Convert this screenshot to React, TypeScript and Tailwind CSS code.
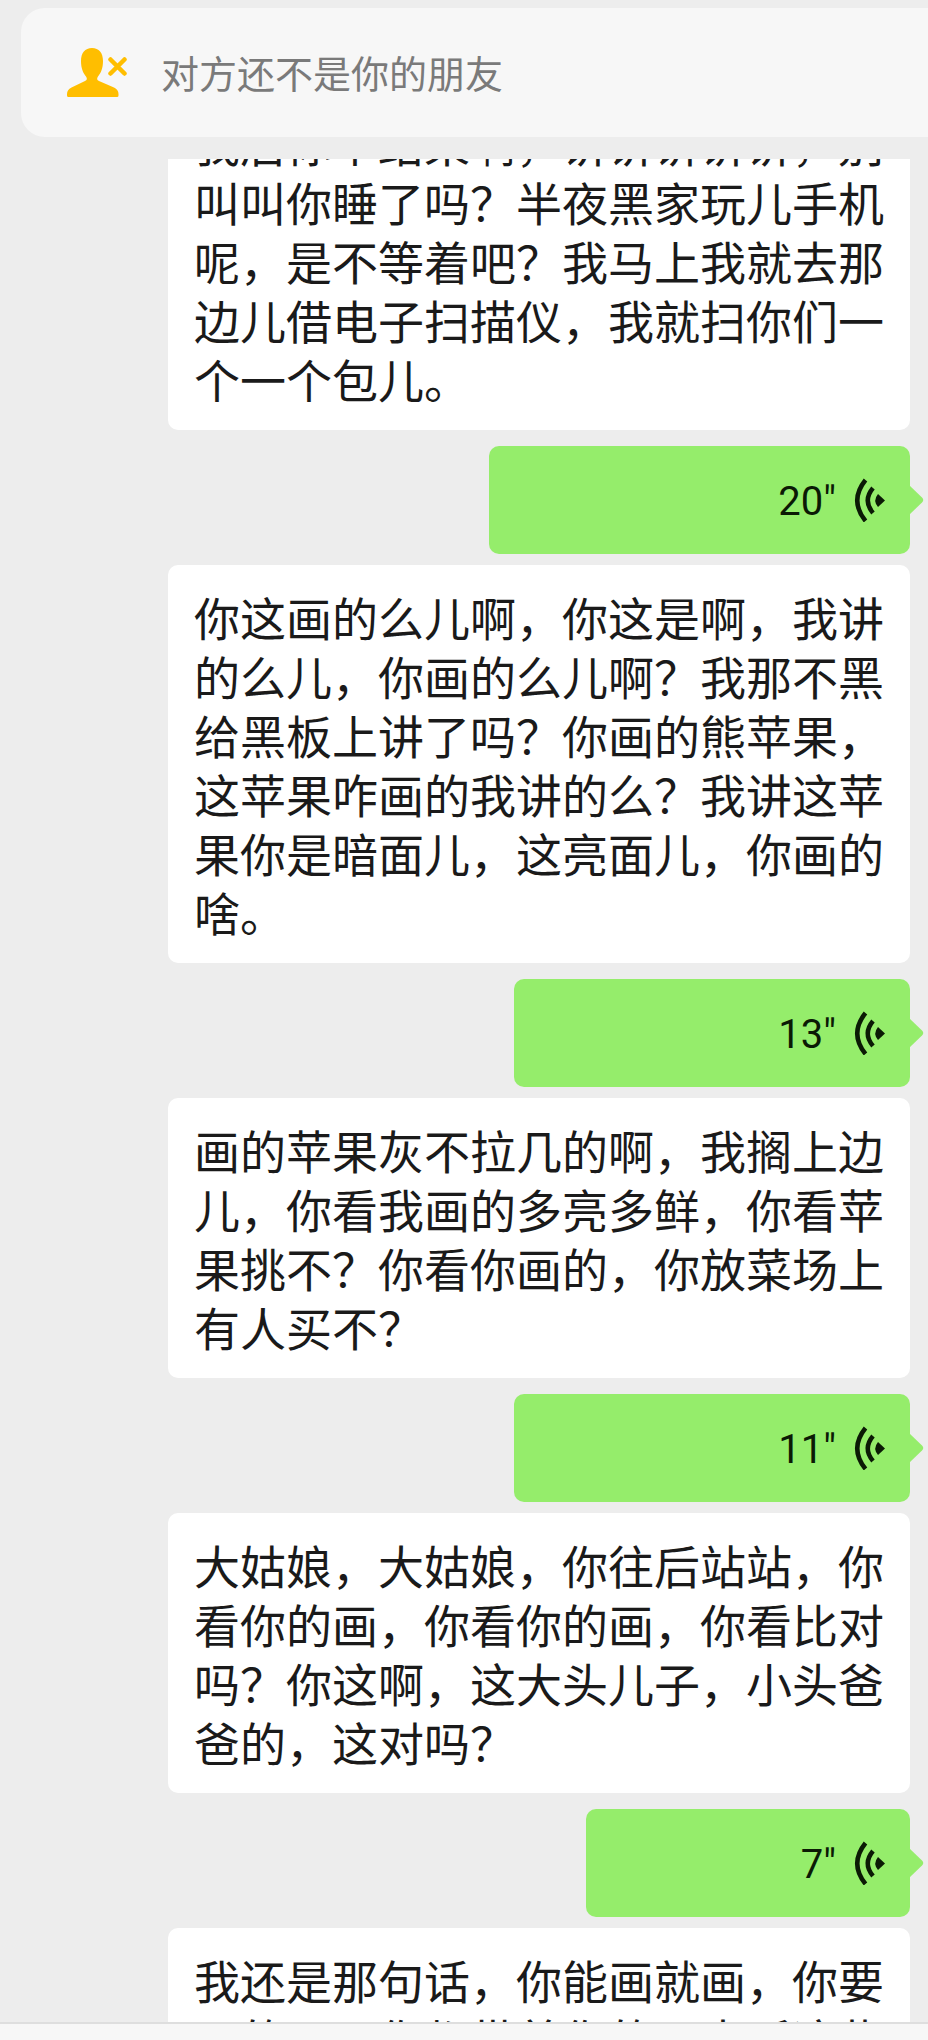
import React, { useLayoutEffect, useRef } from 'react';

type Message = {
  seconds?: number;
  size?: string;
  text: string;
};

const messages: Message[] = [
  {
    text: '我后你个结果啊，讲讲讲讲讲，别叫叫你睡了吗？半夜黑家玩儿手机呢，是不等着吧？我马上我就去那边儿借电子扫描仪，我就扫你们一个一个包儿。',
  },
  {
    seconds: 20,
    size: 'w-[421px]',
    text: '你这画的么儿啊，你这是啊，我讲的么儿，你画的么儿啊？我那不黑给黑板上讲了吗？你画的熊苹果，这苹果咋画的我讲的么？我讲这苹果你是暗面儿，这亮面儿，你画的啥。',
  },
  {
    seconds: 13,
    size: 'w-[396px]',
    text: '画的苹果灰不拉几的啊，我搁上边儿，你看我画的多亮多鲜，你看苹果挑不？你看你画的，你放菜场上有人买不？',
  },
  {
    seconds: 11,
    size: 'w-[396px]',
    text: '大姑娘，大姑娘，你往后站站，你看你的画，你看你的画，你看比对吗？你这啊，这大头儿子，小头爸爸的，这对吗？',
  },
  {
    seconds: 7,
    size: 'w-[324px]',
    text: '我还是那句话，你能画就画，你要画的画，你都带着你的画本听这些',
  },
];

const StrangerIcon = () => (
  <svg viewBox="0 0 60 52" className="h-[52px] w-[60px] shrink-0" aria-hidden="true">
    <path
      fill="#ffbe00"
      d="M25 2C18 2 14 7 14 15c0 7 2 12 5 15.500c1.500 2 1 3.500-1 4.500L4.500 41.500C1.500 43 0 45 0 48v1.500Q0 51 1.500 51h48.500q1.500 0 1.500-1.500V48c0-3-1.500-5-4.500-6.500L32 35c-2-1-2.500-2.500-1-4.500c3-3.500 5-8.500 5-15.500C36 7 32 2 25 2Z"
    />
    <path d="M43.500 13.500 57.500 27.500M57.500 13.500 43.500 27.500" stroke="#ffbe00" strokeWidth="4.500" strokeLinecap="round" />
  </svg>
);

const VoiceIcon = () => (
  <svg viewBox="0 0 32 44" className="h-[44px] w-[32px] shrink-0" fill="none" aria-hidden="true">
    <path d="M11.500 2Q-5 22.500 11.500 43" stroke="#0b1a05" strokeWidth="4.500" />
    <path d="M19 10Q8.500 22.500 19 35" stroke="#0b1a05" strokeWidth="4.500" />
    <path d="M24 16 31 22.500 24 29Q18.500 22.500 24 16Z" fill="#0b1a05" />
  </svg>
);

const VoiceBubble = ({ seconds, size }: { seconds: number; size?: string }) => (
  <button
    type="button"
    className={`relative flex h-[108px] items-center justify-end gap-[18px] rounded-[10px] bg-[#95ed6b] pr-6 ${size}`}
  >
    <span className="pt-1 text-[40px] leading-none text-[#0b1a05]">{seconds}"</span>
    <VoiceIcon />
    {/* tail */}
    <svg viewBox="0 0 15 30" className="absolute top-[39px] -right-[14px] h-[30px] w-[15px]" aria-hidden="true">
      <path d="M0 0 13 12.500Q15.500 15 13 17.500L0 30Z" fill="#95ed6b" />
    </svg>
  </button>
);

const App = () => {
  const listRef = useRef<HTMLElement>(null);

  // open part way down the first message
  useLayoutEffect(() => {
    if (listRef.current) listRef.current.scrollTop = 68;
  }, []);

  return (
    <div className="flex h-screen flex-col bg-[#ededed] font-['Roboto','Noto_Sans_CJK_SC',sans-serif]">
      <header className="mt-2 ml-[21px] flex h-[129px] shrink-0 items-center gap-[34px] rounded-l-3xl bg-[#f7f7f7] pb-px pl-[46px]">
        <StrangerIcon />
        <p className="font-['Noto_Sans_CJK_SC',sans-serif] text-[38px] leading-none text-[#7a7a7a]">
          对方还不是你的朋友
        </p>
      </header>

      <main
        ref={listRef}
        className="mt-[22px] flex min-h-0 flex-1 flex-col gap-4 overflow-y-auto pr-[18px] pl-[168px] [scrollbar-width:none]"
      >
        {messages.map((message, index) => (
          <article key={index} className="flex shrink-0 flex-col items-end gap-[11px]">
            {message.seconds && <VoiceBubble seconds={message.seconds} size={message.size} />}
            <p className="w-full rounded-[10px] bg-white px-[26px] py-[22px] font-['Noto_Sans_CJK_SC',sans-serif] text-[46px] leading-[59px] text-[#1a1a1a]">
              {message.text}
            </p>
          </article>
        ))}
      </main>

      <footer className="h-[18px] shrink-0 border-t-2 border-[#dedede] bg-[#f7f7f7]" />
    </div>
  );
};

export default App;
